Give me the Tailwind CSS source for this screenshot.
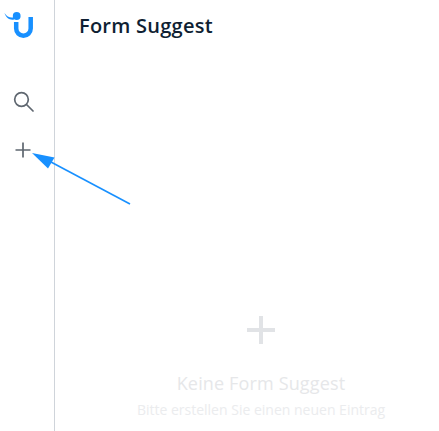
<!DOCTYPE html>
<html lang="en">
<head>
    <meta charset="UTF-8">
    <title>Form Suggest</title>
    <script src="https://cdn.jsdelivr.net/npm/@tailwindcss/browser@4"></script>
</head>
<body class="bg-white font-['Open_Sans',sans-serif] overflow-hidden">
    <div class="relative flex h-[431px] w-[439px] overflow-hidden">
        <!-- Sidebar -->
        <aside class="flex w-[55px] shrink-0 flex-col items-center border-r border-[#cfd4da] pr-[9px]">
            <svg class="mt-[11px] ml-[-3px]" width="34" height="34" viewBox="0 0 34 34" fill="none">
                <path d="M12.2 11V17.5a7.25 7.25 0 0 0 14.5 0V6" stroke="#1890ff" stroke-width="4.5"/>
                <path d="M0.5 2C3 6 7 7.5 10 6L10 8.5C6 9.5 2 7 0.5 2Z" fill="#1890ff"/>
                <circle cx="12.7" cy="5" r="3.9" fill="#1890ff"/>
            </svg>
            <svg class="mt-[45px]" width="22" height="22" viewBox="0 0 22 22" fill="none" stroke="#5f6770" stroke-width="1.7">
                <circle cx="9.5" cy="9.5" r="6.8"/>
                <path d="M14.5 14.5L21 21" stroke-linecap="round"/>
            </svg>
            <svg class="mt-[30px]" width="16" height="16" viewBox="0 0 16 16" fill="none" stroke="#5f6770" stroke-width="1.7">
                <path d="M8 0.5V15.5M0.5 8H15.5"/>
            </svg>
        </aside>

        <!-- Main -->
        <main class="flex flex-1 flex-col">
            <h1 class="mt-[13px] ml-[24px] text-[20px] leading-[26px] font-semibold tracking-[0.25px] text-[#0f1f33]">Form Suggest</h1>
            <div class="mt-[277px] flex flex-col items-center pl-[28px]">
                <svg width="28" height="28" viewBox="0 0 28 28" fill="#e1e3e6">
                    <path d="M12 0h4v12h12v4H16v12h-4V16H0v-4h12z"/>
                </svg>
                <p class="mt-[26px] text-[18px] leading-[26px] tracking-[0.15px] text-[#e6e7e9]">Keine Form Suggest</p>
                <p class="mt-[5px] text-[14px] leading-[18px] text-[#ebecee]">Bitte erstellen Sie einen neuen Eintrag</p>
            </div>
        </main>

        <!-- Arrow -->
        <svg class="absolute top-0 left-0" width="439" height="431" fill="none">
            <path d="M130 204L50 161.5" stroke="#1890ff" stroke-width="1.6"/>
            <path d="M32 153L54.5 157.5L48 168.5Z" fill="#1890ff"/>
        </svg>
    </div>
</body>
</html>
